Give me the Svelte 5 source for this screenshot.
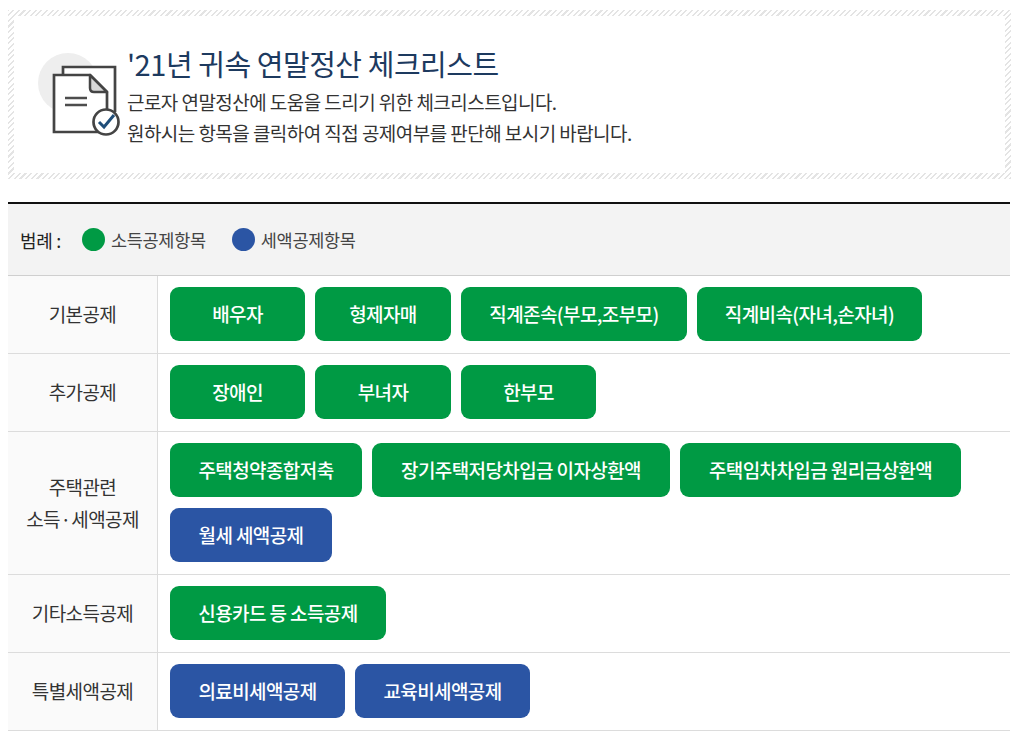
<script>
  const rows = [
    { label: ['기본공제'], items: [['배우자','g',135],['형제자매','g',136],['직계존속(부모,조부모)','g',226],['직계비속(자녀,손자녀)','g',225]] },
    { label: ['추가공제'], items: [['장애인','g',135],['부녀자','g',136],['한부모','g',135]] },
    { label: ['주택관련','소득 · 세액공제'], items: [['주택청약종합저축','g',192],['장기주택저당차입금 이자상환액','g',298],['주택임차차입금 원리금상환액','g',281],['월세 세액공제','b',162]] },
    { label: ['기타소득공제'], items: [['신용카드 등 소득공제','g',216]] },
    { label: ['특별세액공제'], items: [['의료비세액공제','b',175],['교육비세액공제','b',175]] }
  ];
</script>

<div class="page">
  <section class="hatch">
    <div class="intro">
      <div class="icon">
        <svg width="89" height="90" viewBox="0 0 89 90" aria-hidden="true">
          <circle cx="30" cy="33" r="30" fill="#eeeeee" />
          <path d="M25 25V17H77V62H25Z" fill="#fff" stroke="none" />
          <path d="M25 25V17H77V62" fill="none" stroke="#444" stroke-width="2.7" />
          <path d="M16 25H52L69 42V82H16Z" fill="#fff" stroke="#444" stroke-width="2.7" />
          <path d="M52 25V38Q52 42 56 42H69Z" fill="#d8d8d8" stroke="#444" stroke-width="2.5" stroke-linejoin="round" />
          <path d="M27 48H49M27 55H49" stroke="#4d4d4d" stroke-width="2.4" />
          <circle cx="68" cy="72" r="12.5" fill="#fff" stroke="#444" stroke-width="2.7" />
          <path d="M61 72L66 77L76 65" fill="none" stroke="#1f4e79" stroke-width="3" />
        </svg>
      </div>
      <div class="copy">
        <h1>'21년 귀속 연말정산 체크리스트</h1>
        <p>근로자 연말정산에 도움을 드리기 위한 체크리스트입니다.</p>
        <p>원하시는 항목을 클릭하여 직접 공제여부를 판단해 보시기 바랍니다.</p>
      </div>
    </div>
  </section>

  <section class="table">
    <div class="legend">
      <strong>범례 :</strong>
      <span class="key"><i class="dot g"></i>소득공제항목</span>
      <span class="key"><i class="dot b"></i>세액공제항목</span>
    </div>
    {#each rows as row}
      <div class="row">
        <div class="head">
          {#each row.label as line}<div>{line}</div>{/each}
        </div>
        <div class="cell">
          {#each row.items as [text, color, width]}
            <button class={color} style="width:{width}px">{text}</button>
          {/each}
        </div>
      </div>
    {/each}
  </section>
</div>

<style>
  :global(body) {
    margin: 0;
    background: #fff;
  }
  .page {
    padding: 10px 12px 0 8px;
    font-family: "Noto Sans CJK KR", "Noto Sans", sans-serif;
    color: #333;
  }
  .hatch {
    padding: 6px;
    height: 169px;
    box-sizing: border-box;
    background: repeating-linear-gradient(-45deg, #e4e4e4 0 1.5px, #fff 1.5px 4px);
  }
  .intro {
    height: 100%;
    background: #fff;
    display: flex;
    align-items: flex-start;
    padding: 34px 0 0 24px;
    box-sizing: border-box;
  }
  .icon {
    width: 89px;
    height: 90px;
    flex: none;
  }
  .copy {
    margin-top: -6px;
  }
  h1 {
    margin: 0 0 5px;
    font-size: 29px;
    font-weight: 400;
    line-height: 38px;
    letter-spacing: -0.45px;
    color: #1d3a5f;
  }
  p {
    margin: 0;
    font-size: 19px;
    line-height: 30.5px;
    letter-spacing: -0.55px;
    color: #333;
  }
  .table {
    margin: 23px 1px 0 0;
    border-top: 2px solid #111;
  }
  .legend {
    height: 71px;
    background: #f3f3f3;
    border-bottom: 1px solid #cfcfcf;
    display: flex;
    align-items: center;
    padding-left: 12px;
    font-size: 17.5px;
    letter-spacing: -0.3px;
  }
  .legend strong {
    font-weight: 400;
    margin-right: 21px;
    font-size: 18px;
    color: #222;
  }
  .key {
    display: flex;
    align-items: center;
    margin-right: 26px;
    color: #444;
  }
  .dot {
    width: 23px;
    height: 23px;
    border-radius: 50%;
    margin-right: 6px;
  }
  .dot.g { background: #009a44; }
  .dot.b { background: #2b55a4; }
  .row {
    display: flex;
    border-bottom: 1px solid #dcdcdc;
  }
  .head {
    width: 150px;
    flex: none;
    box-sizing: border-box;
    padding-bottom: 1px;
    background: #fafafa;
    border-right: 1px solid #dcdcdc;
    display: flex;
    flex-direction: column;
    justify-content: center;
    text-align: center;
    font-size: 19px;
    font-weight: 400;
    line-height: 32px;
    letter-spacing: -0.6px;
    word-spacing: -3px;
    color: #333;
  }
  .cell {
    flex: 1;
    display: flex;
    flex-wrap: wrap;
    gap: 11px 10px;
    padding: 11px 12px 12px;
  }
  button {
    height: 54px;
    padding: 0 0 2px;
    border: 0;
    border-radius: 9px;
    font-family: inherit;
    font-size: 19px;
    font-weight: 500;
    letter-spacing: -0.6px;
    color: #fff;
    box-sizing: border-box;
  }
  button.g { background: #009a44; }
  button.b { background: #2b55a4; }
</style>
